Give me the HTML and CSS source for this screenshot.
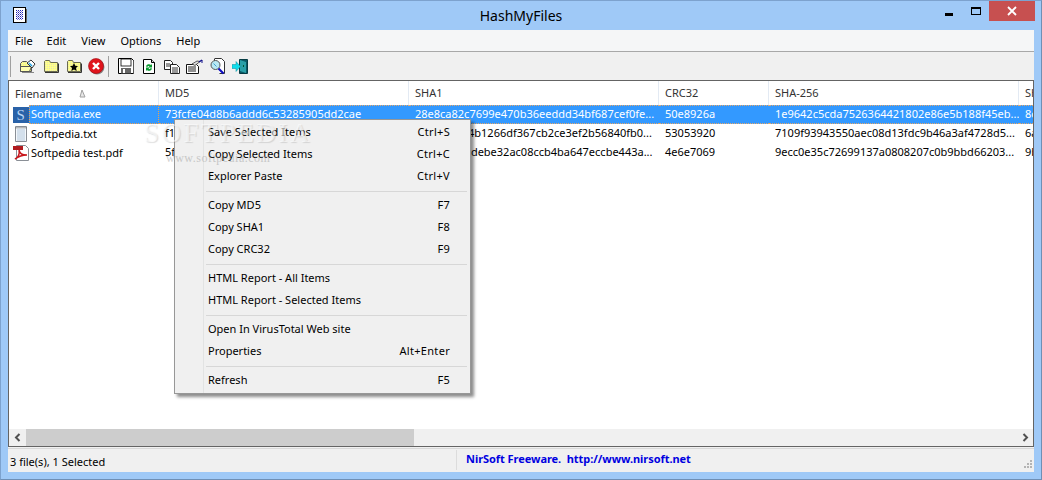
FILE: index.html
```html
<!DOCTYPE html>
<html lang="en">
<head>
<meta charset="utf-8">
<title>HashMyFiles</title>
<link rel="stylesheet" href="styles.css">
</head>
<body>
<svg class="defs" width="0" height="0" aria-hidden="true">
  <defs>
    <pattern id="dots" width="2" height="2" patternUnits="userSpaceOnUse"><rect width="2" height="2" fill="#ffff88"/><rect width="1" height="1" fill="#e4e4b4"/></pattern>
    <pattern id="bluedots" width="2" height="2" patternUnits="userSpaceOnUse"><rect width="2" height="2" fill="#fff"/><rect width="1" height="1" fill="#2020b8"/><rect x="1" y="1" width="1" height="1" fill="#8080d8"/></pattern>
  </defs>
</svg>
<div class="window">
  <header class="titlebar">
    <svg class="app-icon" width="16" height="18" viewBox="0 0 16 18"><rect x="1.5" y="1.5" width="12" height="15" fill="#fff" stroke="#000"/><rect x="14" y="3" width="1" height="14" fill="#666"/><rect x="4" y="4" width="7" height="10" fill="url(#bluedots)"/></svg>
    <h1 class="title">HashMyFiles</h1>
    <div class="win-controls">
      <span class="win-btn"><span class="min-glyph"></span></span>
      <span class="win-btn"><span class="max-glyph"></span></span>
      <span class="win-btn close"><svg width="10" height="10" viewBox="0 0 10 10"><path d="M1 1l8 8M9 1l-8 8" stroke="#fff" stroke-width="1.8"/></svg></span>
    </div>
  </header>
  <div class="client">
    <nav class="menubar"><span>File</span><span>Edit</span><span>View</span><span>Options</span><span>Help</span></nav>
    <div class="toolbar">
      <span class="tb-sep"></span>
      <span class="tb-btn"><svg width="17" height="16" viewBox="0 0 17 16"><path d="M1.5 5.5l2-2h4l1 1h4v9h-11z" fill="url(#dots)" stroke="#555"/><path d="M1.5 8.5h11l-2 5h-9z" fill="#ffffb0" stroke="#555"/><path d="M8 5l4-3 4 4-3 4z" fill="#fff" stroke="#333"/><path d="M10 5l3 3" stroke="#20a0e0" stroke-width="1.4"/><rect x="3" y="14" width="12" height="1" fill="#888"/></svg></span>
      <span class="tb-btn"><svg width="16" height="16" viewBox="0 0 16 16"><path d="M1.5 13.5v-10l1-1h4l1 2h7v9z" fill="url(#dots)" stroke="#6b6b50"/><path d="M2 14.5h13.500v-9" fill="none" stroke="#333"/></svg></span>
      <span class="tb-btn"><svg width="16" height="16" viewBox="0 0 16 16"><path d="M1.500 13.500v-10l1-1h4l1 2h7v9z" fill="url(#dots)" stroke="#6b6b50"/><path d="M2 14.500h13.500v-9" fill="none" stroke="#333"/><path d="M8 5l1.300 2.700 2.700.3-2 2 .7 3-2.700-1.500-2.700 1.500.7-3-2-2 2.700-.3z" fill="#000"/></svg></span>
      <span class="tb-btn"><svg width="17" height="17" viewBox="0 0 17 17"><circle cx="9" cy="9" r="7.500" fill="#888"/><circle cx="8" cy="8" r="7.500" fill="#e0141c" stroke="#9a0a10" stroke-width=".6"/><path d="M5 5l6 6M11 5l-6 6" stroke="#fff" stroke-width="2.400"/></svg></span>
      <span class="tb-sep"></span>
      <span class="tb-btn"><svg width="16" height="16" viewBox="0 0 16 16"><path d="M.5.5h13l2 2v13H.5z" fill="#fff" stroke="#000"/><rect x="3" y="1" width="10" height="7" fill="#fff" stroke="#000" stroke-width=".8"/><rect x="3" y="10" width="10" height="5.500" fill="#666"/><rect x="5" y="11" width="2" height="4" fill="#fff"/><rect x="15" y="3" width="1" height="13" fill="#555"/></svg></span>
      <span class="tb-btn"><svg width="16" height="17" viewBox="0 0 16 17"><path d="M2.500 1.500h8l3 3v11h-11z" fill="#fff" stroke="#000"/><path d="M10.500 1.500v3h3" fill="#ddd" stroke="#000"/><path d="M5 8.500a3 3 0 0 1 5-1.500l1-1v3.500H7.500l1-1a1.500 1.500 0 0 0-2.200.5z" fill="#0a9a30"/><path d="M11 10.500a3 3 0 0 1-5 1.500l-1 1V9.500h3.500l-1 1a1.500 1.500 0 0 0 2.200-.5z" fill="#0a9a30"/></svg></span>
      <span class="tb-btn"><svg width="16" height="15" viewBox="0 0 16 15"><path d="M.5 1.500h6l2 2v7h-8z" fill="#fff" stroke="#222"/><path d="M2 5h4M2 7h4" stroke="#333"/><path d="M6.500 5.500h6l3 3v6h-9z" fill="#fff" stroke="#222"/><path d="M8 9h6M8 11h6M8 13h6" stroke="#333"/></svg></span>
      <span class="tb-btn"><svg width="17" height="15" viewBox="0 0 17 15"><path d="M.5 5.500h10l2 2v7H.5z" fill="#fff" stroke="#111"/><path d="M2 8h8M2 10h8M2 12h8" stroke="#222"/><path d="M6 5l5-3 3 .5-5 4z" fill="#ddd" stroke="#222" stroke-width=".7"/><path d="M13 3l3-2" stroke="#10108a" stroke-width="1.500"/><path d="M16 1v3" stroke="#10108a"/></svg></span>
      <span class="tb-btn"><svg width="17" height="17" viewBox="0 0 17 17"><path d="M5.500.5h7l3 3v12h-5" fill="#fff" stroke="#333"/><path d="M5.500 1v3" stroke="#333"/><circle cx="6.500" cy="7" r="4.500" fill="#b8e8f4" stroke="#555"/><path d="M4.500 5.500l3 3" stroke="#40a0d0"/><path d="M9.500 10.500l5 5" stroke="#1010c0" stroke-width="2.200"/></svg></span>
      <span class="tb-btn"><svg width="17" height="17" viewBox="0 0 17 17"><path d="M7.500 1.500h8v14h-8z" fill="#0a5a66" stroke="#063c44"/><path d="M8 2l6 2v11l-6-2z" fill="#2aa0a8"/><path d="M11.500 7v2" stroke="#053"/><path d="M0 6.500h4V3.500l4.500 5-4.500 5v-3H0z" fill="#10dcea" stroke="#0a8a9a" stroke-width=".5"/></svg></span>
    </div>
    <section class="list">
      <div class="row head">
        <div class="cell first">Filename<svg class="sort" width="9" height="9" viewBox="0 0 9 9"><path d="M5 1l3 7H3z" fill="#e8e8e8" stroke="#a0a0a0"/></svg></div>
        <div class="cell">MD5</div><div class="cell">SHA1</div><div class="cell">CRC32</div><div class="cell">SHA-256</div><div class="cell">SHA-512</div>
      </div>
      <div class="rows">
        <div class="row selected">
          <div class="cell first"><svg class="file-icon" width="16" height="16" viewBox="0 0 16 16"><rect width="16" height="16" fill="#2a62a8"/><text x="3.500" y="13" class="s-letter">S</text></svg><span class="fname">Softpedia.exe</span></div>
          <div class="cell">73fcfe04d8b6addd6c53285905dd2cae</div><div class="cell">28e8ca82c7699e470b36eeddd34bf687cef0fe...</div><div class="cell">50e8926a</div><div class="cell">1e9642c5cda7526364421802e86e5b188f45eb...</div><div class="cell">8c3f1a</div>
        </div>
        <div class="row">
          <div class="cell first"><svg class="file-icon" width="16" height="16" viewBox="0 0 16 16"><path d="M2.500.5h11v15h-11z" fill="#f4f8fc" stroke="#8a8f96"/><path d="M4 4h8M4 6h8M4 8h8M4 10h8M4 12h8M4 14h8" stroke="#b4c8dc"/><path d="M3 1v1.500M5 1v1.500M7 1v1.500M9 1v1.500M11 1v1.500M13 1v1.500" stroke="#777"/></svg><span class="fname">Softpedia.txt</span></div>
          <div class="cell">f1d2a93c07be41d6e8a05b7c34f1e926</div><div class="cell">9a03c18f24b1266df367cb2ce3ef2b56840fb0...</div><div class="cell">53053920</div><div class="cell">7109f93943550aec08d13fdc9b46a3af4728d5...</div><div class="cell">6a7e20</div>
        </div>
        <div class="row">
          <div class="cell first"><svg class="file-icon" width="16" height="16" viewBox="0 0 16 16"><path d="M3.500.5h9l3 3v12h-12z" fill="#fff" stroke="#8a8f96"/><rect x="0" y="1" width="10" height="4" fill="#b01c20"/><path d="M2 14c3-1 5-5 4-9 1 4 3 5 8 5-4 0-8 1-12 4z" fill="none" stroke="#c8161c" stroke-width="1.500"/></svg><span class="fname">Softpedia test.pdf</span></div>
          <div class="cell">5f80b7d2c19ae34670dd12bc58e7fa03</div><div class="cell">3c7e1a9b2debe32ac08ccb4ba647eccbe443a...</div><div class="cell">4e6e7069</div><div class="cell">9ecc0e35c72699137a0808207c0b9bbd66203...</div><div class="cell">9b14d7</div>
        </div>
      </div>
      <div class="hscroll">
        <span class="arrow"><svg width="8" height="9" viewBox="0 0 8 9"><path d="M5.500 1L2 4.500 5.500 8" fill="none" stroke="#505050" stroke-width="2"/></svg></span>
        <div class="track"><div class="thumb"></div></div>
        <span class="arrow"><svg width="8" height="9" viewBox="0 0 8 9"><path d="M2.500 1L6 4.500 2.500 8" fill="none" stroke="#505050" stroke-width="2"/></svg></span>
      </div>
    </section>
    <footer class="statusbar">
      <div class="st-left">3 file(s), 1 Selected</div>
      <div class="st-right"><span class="nirsoft">NirSoft Freeware.  http://www.nirsoft.net</span></div>
      <svg class="grip" width="9" height="9" viewBox="0 0 9 9"><path d="M6 0h2v2H6zM3 3h2v2H3zM6 3h2v2H6zM0 6h2v2H0zM3 6h2v2H3zM6 6h2v2H6z" fill="#b4b4b4"/></svg>
    </footer>
  </div>
  <div class="menu">
    <div class="mi"><span>Save Selected Items</span><span class="key">Ctrl+S</span></div>
    <div class="mi"><span>Copy Selected Items</span><span class="key">Ctrl+C</span></div>
    <div class="mi"><span>Explorer Paste</span><span class="key">Ctrl+V</span></div>
    <div class="ms"></div>
    <div class="mi"><span>Copy MD5</span><span class="key">F7</span></div>
    <div class="mi"><span>Copy SHA1</span><span class="key">F8</span></div>
    <div class="mi"><span>Copy CRC32</span><span class="key">F9</span></div>
    <div class="ms"></div>
    <div class="mi"><span>HTML Report - All Items</span></div>
    <div class="mi"><span>HTML Report - Selected Items</span></div>
    <div class="ms"></div>
    <div class="mi"><span>Open In VirusTotal Web site</span></div>
    <div class="mi"><span>Properties</span><span class="key">Alt+Enter</span></div>
    <div class="ms"></div>
    <div class="mi"><span>Refresh</span><span class="key">F5</span></div>
  </div>
  <div class="watermark"><div class="wm-big">SOFTPEDIA</div><div class="wm-small">www.softpedia.com</div></div>
</div>
</body>
</html>
```
FILE: styles.css
```css
* { box-sizing: border-box; }
html, body { margin: 0; padding: 0; }
body { width: 1042px; height: 480px; overflow: hidden; font-family: "Noto Sans", "Open Sans", sans-serif; font-size: 11px; color: #000; }
.defs { position: absolute; }
.window { position: relative; width: 1042px; height: 480px; background: #9fc9f7; border: 1px solid #7da2ce; border-right-color: #6f8fb5; border-bottom-color: #6f8fb5; display: flex; flex-direction: column; overflow: hidden; }
.titlebar { height: 29px; flex: none; display: flex; align-items: flex-start; position: relative; }
.app-icon { margin: 5px 0 0 11px; }
.title { position: absolute; left: 0; right: 0; top: 5px; margin: 0; text-align: center; font-weight: 400; font-size: 14px; line-height: 20px; color: #000; }
.win-controls { margin-left: auto; margin-right: 6px; display: flex; position: relative; }
.win-btn { width: 27px; height: 20px; display: flex; align-items: center; justify-content: center; }
.win-btn.close { width: 46px; background: #c75050; height: 20px; }
.min-glyph { width: 8px; height: 3px; background: #000; margin-top: 7px; }
.max-glyph { width: 10px; height: 8px; border: 1px solid #000; border-top-width: 2px; }
.client { margin: 0 7px 7px 7px; flex: 1; display: flex; flex-direction: column; background: #f0f0f0; min-height: 0; }
.menubar { height: 21px; flex: none; background: #f5f6f7; display: flex; gap: 15px; padding: 0 0 0 7px; align-items: center; line-height: 20px; }
.menubar span:first-child { margin-right: -1px; }
.toolbar { height: 29px; flex: none; display: flex; align-items: center; background: #f0f0f0; border-top: 1px solid #a8a8a8; padding-left: 2px; }
.tb-sep { width: 1px; height: 21px; background: #a0a0a0; }
.tb-btn { width: 23px; height: 17px; display: flex; align-items: center; justify-content: center; }
.tb-sep + .tb-btn { margin-left: 5px; }
.list { flex: 1; min-height: 0; display: flex; flex-direction: column; background: #fff; border: 1px solid #646464; overflow: hidden; }
.row { display: grid; grid-template-columns: 150px 250px 250px 110px 250px 100px; width: 1110px; height: 19px; flex: none; line-height: 18px; }
.cell { padding-left: 6px; white-space: pre; overflow: hidden; }
.cell.first { display: flex; align-items: center; padding-left: 4px; }
.head { height: 24px; line-height: 23px; color: #333; }
.head .cell { border-right: 1px solid #e3eaf3; }
.head .cell.first { padding-left: 6px; }
.rows { flex: 1; min-height: 0; }
.sort { margin-left: 15px; margin-top: 1px; }
.file-icon { flex: none; }
.s-letter { font-family: "Liberation Serif", serif; font-size: 15px; fill: #b8d4f4; }
.fname { display: block; padding-left: 2px; }
.selected { color: #fff; line-height: 16px; }
.selected .fname { background: #3399ff; flex: 1; height: 19px; line-height: 18px; outline: 1px dotted #f0a050; outline-offset: -1px; }
.selected .cell { background: #3399ff; border-top: 1px dotted #e8a868; border-bottom: 1px dotted #e8a868; }
.selected .cell.first { background: #fff; border: 0; }
.hscroll { height: 17px; flex: none; display: flex; background: #f0f0f0; align-items: stretch; }
.arrow { width: 17px; flex: none; display: flex; align-items: center; justify-content: center; }
.track { flex: 1; display: flex; }
.thumb { width: 388px; background: #cdcdcd; }
.statusbar { height: 24px; flex: none; display: flex; background: #f0f0f0; border-top: 1px solid #d8d8d8; margin-top: 1px; position: relative; line-height: 23px; }
.st-left { width: 449px; padding-left: 2px; border-right: 1px solid #dcdcdc; height: 20px; margin-top: 1px; }
.st-right { padding-left: 9px; }
.nirsoft { color: #0000e0; font-weight: 700; font-size: 11px; letter-spacing: -.05px; white-space: pre; display: block; line-height: 19px; }
.grip { position: absolute; right: 1px; bottom: 3px; }
.menu { position: absolute; left: 173px; top: 118px; width: 297px; height: 275px; padding: 2px 3px 0 2px; background: linear-gradient(to right, #f0f0f0 28px, #e2e3e3 28px, #e2e3e3 29px, #f0f0f0 29px); border: 1px solid #979797; box-shadow: 3px 3px 3px rgba(0,0,0,.45); }
.mi { height: 22px; display: flex; justify-content: space-between; padding: 0 17px 0 31px; line-height: 19px; }
.key { letter-spacing: .3px; }
.ms { height: 7px; margin: 0 0 0 29px; position: relative; }
.ms::after { content: ""; position: absolute; left: 0; right: 0; top: 3px; height: 1px; background: #d7d7d7; }
.watermark { position: absolute; left: 143px; top: 117px; color: #fff; pointer-events: none; font-family: "Liberation Serif", serif; }
.wm-big { font-size: 27px; line-height: 30px; letter-spacing: 2.5px; color: rgba(255,255,255,.55); text-shadow: 1px 1px 1px rgba(110,110,110,.22); }
.wm-small { font-size: 12px; line-height: 14px; color: #8a8a8a; opacity: .4; margin-left: 22px; margin-top: 3px; letter-spacing: .5px; }
```
